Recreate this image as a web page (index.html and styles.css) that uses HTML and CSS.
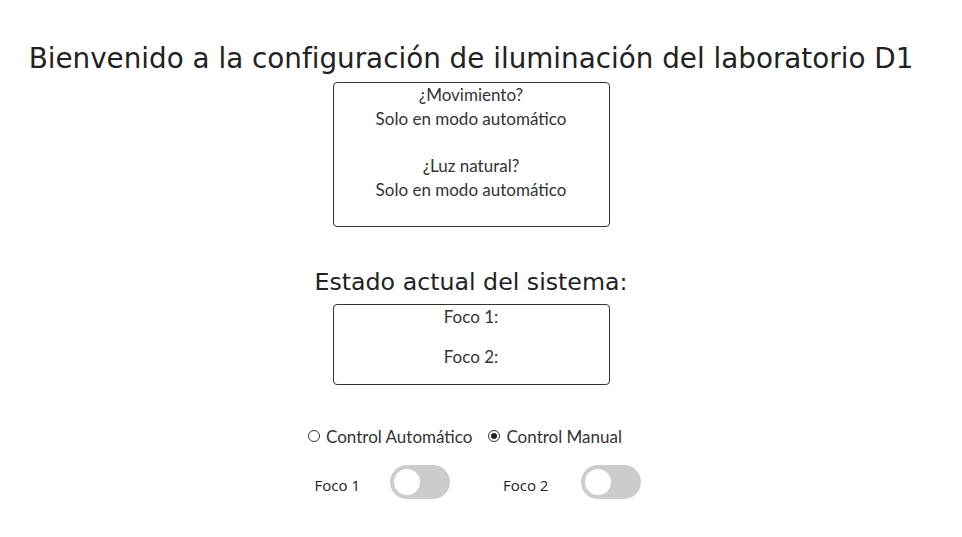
FILE: index.html
```html
<!DOCTYPE html>
<html lang="es">
<head>
  <meta charset="UTF-8" />
  <meta name="viewport" content="width=device-width, initial-scale=1.0" />
  <title>Iluminación laboratorio D1</title>
  <link rel="stylesheet" href="styles.css">
</head>
<body>

<div class="page">
  <h1>Bienvenido a la configuración de iluminación del laboratorio D1</h1>

  <div class="caja caja-sensores">
    <p>¿Movimiento?</p>
    <p id="movimiento">Solo en modo automático</p>
    <p class="vacio">&nbsp;</p>
    <p>¿Luz natural?</p>
    <p id="luz">Solo en modo automático</p>
    <p class="vacio">&nbsp;</p>
  </div>

  <h2>Estado actual del sistema:</h2>

  <div class="caja caja-estado">
    <p id="foco1">Foco 1:</p>
    <p id="foco2">Foco 2:</p>
  </div>

  <div class="modos">
    <label class="modo"><input type="radio" name="modo" value="auto"> Control Automático</label>
    <label class="modo"><input type="radio" name="modo" value="manual" checked> Control Manual</label>
  </div>

  <div class="focos">
    <span class="foco-label">Foco 1</span>
    <label class="switch">
      <input type="checkbox" id="sw1">
      <span class="slider"></span>
    </label>
    <span class="foco-label foco-2">Foco 2</span>
    <label class="switch">
      <input type="checkbox" id="sw2">
      <span class="slider"></span>
    </label>
  </div>
</div>

</body>
</html>
```

FILE: styles.css
```css
* {
  box-sizing: border-box;
}
body {
  margin: 0;
  font-family: 'Lato', sans-serif;
  color: #333;
  background: #fff;
}
.page {
  width: 942px;
  text-align: center;
}
h1 {
  font-family: 'DejaVu Sans', sans-serif;
  font-weight: 400;
  font-size: 27.8px;
  line-height: 40px;
  margin: 39px 0 3px;
  color: #222;
  white-space: nowrap;
}
h2 {
  font-family: 'DejaVu Sans', sans-serif;
  font-weight: 400;
  font-size: 23.7px;
  line-height: 30px;
  margin: 40px 0 7px;
  color: #222;
}
.caja {
  width: 277px;
  margin: 0 auto;
  border: 1px solid #333;
  border-radius: 4px;
  font-size: 17px;
}
.caja p {
  margin: 0;
  line-height: 23.8px;
}
.caja-estado {
  height: 81px;
  padding: 0;
}
.caja-estado p {
  line-height: 24px;
  margin-bottom: 16px;
}
.caja-estado p:last-child {
  margin-bottom: 0;
}
.modos {
  display: flex;
  justify-content: center;
  gap: 16px;
  margin: 42px 0 0;
  padding-right: 12px;
  font-size: 17px;
  line-height: 20px;
}
.modo {
  display: flex;
  align-items: center;
  gap: 6px;
}
.modo input {
  appearance: none;
  width: 12px;
  height: 12px;
  margin: 0;
  border: 1px solid #333;
  border-radius: 50%;
  position: relative;
  top: -1px;
}
.modo input:checked::after {
  content: "";
  position: absolute;
  left: 2px;
  top: 2px;
  width: 6px;
  height: 6px;
  border-radius: 50%;
  background: #222;
}
.focos {
  display: flex;
  justify-content: center;
  align-items: center;
  margin-top: 18px;
  padding-left: 14px;
  font-family: 'Open Sans', sans-serif;
  font-size: 15px;
  color: #222;
}
.foco-label {
  margin: 7px 30px 0 0;
}
.foco-2 {
  margin-left: 53px;
  margin-right: 33px;
}
.switch {
  position: relative;
  display: inline-block;
  width: 60px;
  height: 34px;
}
.switch input {
  opacity: 0;
  width: 0;
  height: 0;
}
.slider {
  position: absolute;
  inset: 0;
  background: #ccc;
  border-radius: 34px;
  cursor: pointer;
}
.slider::before {
  content: "";
  position: absolute;
  left: 4px;
  bottom: 4px;
  width: 26px;
  height: 26px;
  border-radius: 50%;
  background: #fff;
}
```
